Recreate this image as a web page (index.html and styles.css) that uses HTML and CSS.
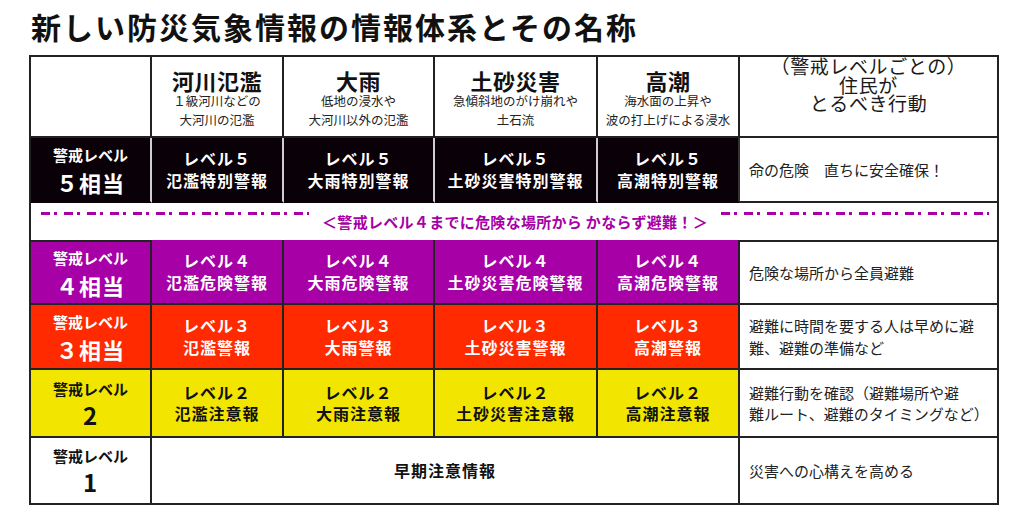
FILE: index.html
```html
<!DOCTYPE html>
<html lang="ja">
<head>
<meta charset="utf-8">
<title>新しい防災気象情報の情報体系とその名称</title>
<link rel="stylesheet" href="styles.css">
</head>
<body>
<h1 class="title">新しい防災気象情報の情報体系とその名称</h1>
<div class="table">
  <div class="cell head-blank"></div>
  <div class="cell head"><div class="head-title">河川氾濫</div><div class="head-sub">１級河川などの<br>大河川の氾濫</div></div>
  <div class="cell head"><div class="head-title">大雨</div><div class="head-sub">低地の浸水や<br>大河川以外の氾濫</div></div>
  <div class="cell head"><div class="head-title">土砂災害</div><div class="head-sub">急傾斜地のがけ崩れや<br>土石流</div></div>
  <div class="cell head"><div class="head-title">高潮</div><div class="head-sub">海水面の上昇や<br>波の打上げによる浸水</div></div>
  <div class="cell head-action">（警戒レベルごとの）<br>住民が<br>とるべき行動</div>

  <div class="cell label l5"><span class="label-top">警戒レベル</span><span class="label-num">５相当</span></div>
  <div class="cell warn l5"><span>レベル５</span><span>氾濫特別警報</span></div>
  <div class="cell warn l5"><span>レベル５</span><span>大雨特別警報</span></div>
  <div class="cell warn l5"><span>レベル５</span><span>土砂災害特別警報</span></div>
  <div class="cell warn l5 l5-last"><span>レベル５</span><span>高潮特別警報</span></div>
  <div class="cell action">命の危険　直ちに安全確保！</div>

  <div class="cell message"><span class="dash"></span><span class="message-text">＜警戒レベル４までに危険な場所から かならず避難！＞</span><span class="dash"></span></div>

  <div class="cell label l4 top-line"><span class="label-top">警戒レベル</span><span class="label-num">４相当</span></div>
  <div class="cell warn l4"><span>レベル４</span><span>氾濫危険警報</span></div>
  <div class="cell warn l4"><span>レベル４</span><span>大雨危険警報</span></div>
  <div class="cell warn l4"><span>レベル４</span><span>土砂災害危険警報</span></div>
  <div class="cell warn l4"><span>レベル４</span><span>高潮危険警報</span></div>
  <div class="cell action top-line">危険な場所から全員避難</div>

  <div class="cell label l3"><span class="label-top">警戒レベル</span><span class="label-num">３相当</span></div>
  <div class="cell warn l3"><span>レベル３</span><span>氾濫警報</span></div>
  <div class="cell warn l3"><span>レベル３</span><span>大雨警報</span></div>
  <div class="cell warn l3"><span>レベル３</span><span>土砂災害警報</span></div>
  <div class="cell warn l3"><span>レベル３</span><span>高潮警報</span></div>
  <div class="cell action">避難に時間を要する人は早めに避<br>難、避難の準備など</div>

  <div class="cell label l2"><span class="label-top">警戒レベル</span><span class="label-num half">2</span></div>
  <div class="cell warn l2"><span>レベル２</span><span>氾濫注意報</span></div>
  <div class="cell warn l2"><span>レベル２</span><span>大雨注意報</span></div>
  <div class="cell warn l2"><span>レベル２</span><span>土砂災害注意報</span></div>
  <div class="cell warn l2"><span>レベル２</span><span>高潮注意報</span></div>
  <div class="cell action">避難行動を確認（避難場所や避<br>難ルート、避難のタイミングなど）</div>

  <div class="cell label l1"><span class="label-top">警戒レベル</span><span class="label-num half">1</span></div>
  <div class="cell warn early">早期注意情報</div>
  <div class="cell action">災害への心構えを高める</div>
</div>
</body>
</html>
```

FILE: styles.css
```css
body {
  margin: 0;
  background: #ffffff;
  font-family: "Noto Sans CJK JP", "Noto Sans", sans-serif;
  color: #111111;
}

.title {
  margin: 6px 0 0 31px;
  font-size: 30px;
  line-height: 40px;
  font-weight: 700;
  letter-spacing: 2px;
}

.table {
  display: grid;
  grid-template-columns: 121px 132px 151px 163px 142px 259px;
  grid-template-rows: 81px 65px 37px 65px 65px 68px 67px;
  width: max-content;
  margin: 9px 0 0 29px;
  border-left: 2px solid #222222;
  border-top: 2px solid #222222;
}

.cell {
  box-sizing: border-box;
  border-right: 2px solid #222222;
  border-bottom: 2px solid #222222;
  display: flex;
  flex-direction: column;
  align-items: center;
  justify-content: center;
  text-align: center;
  min-width: 0;
}

.head {
  justify-content: flex-start;
  padding-top: 11px;
}

.head-title {
  font-size: 22px;
  font-weight: 700;
  line-height: 24px;
  letter-spacing: 0.5px;
}

.head-sub {
  font-size: 12.5px;
  line-height: 19px;
  margin-top: -1px;
  color: #222222;
  white-space: nowrap;
}

.head-action {
  justify-content: flex-start;
  font-size: 19px;
  line-height: 18.5px;
  letter-spacing: 0.6px;
  color: #1a1a1a;
  padding-top: 0;
}

.warn {
  font-size: 16px;
  font-weight: 700;
  line-height: 21.5px;
  letter-spacing: 1px;
  white-space: nowrap;
}

.label-top {
  font-size: 15px;
  font-weight: 700;
  line-height: 20px;
}

.label-num {
  font-size: 22px;
  font-weight: 700;
  line-height: 26px;
  margin-top: 4px;
  letter-spacing: 1px;
}

.label-num.half {
  font-size: 24px;
  margin-top: 3px;
}

.l5 {
  background: #0a0008;
  color: #ffffff;
  border-right-color: #cfcfcf;
  border-bottom-color: #0a0008;
}

.l5-last {
  border-right-color: #333333;
}

.l4 {
  background: #a600a6;
  color: #ffffff;
}

.l3 {
  background: #ff2a00;
  color: #ffffff;
}

.l2 {
  background: #f2e600;
  color: #111111;
}

.l1 {
  background: #ffffff;
}

.top-line {
  border-top: 2px solid #222222;
}

.action {
  align-items: flex-start;
  text-align: left;
  padding-left: 9px;
  font-size: 15px;
  line-height: 21.5px;
  color: #222222;
  white-space: nowrap;
}

.message {
  grid-column: 1 / -1;
  flex-direction: row;
  align-items: center;
  padding: 0 8px 0 10px;
  border-bottom: none;
}

.dash {
  flex: 1;
  align-self: flex-start;
  height: 3px;
  margin-top: 9px;
  background: repeating-linear-gradient(to right, #a600a6 0 9px, transparent 9px 13px, #a600a6 13px 16px, transparent 16px 23px);
}

.message-text {
  margin: 0 13px;
  font-size: 15px;
  font-weight: 700;
  line-height: 20px;
  color: #a600a6;
  letter-spacing: 0.3px;
  white-space: nowrap;
}

.early {
  grid-column: 2 / 6;
  color: #111111;
}
```
